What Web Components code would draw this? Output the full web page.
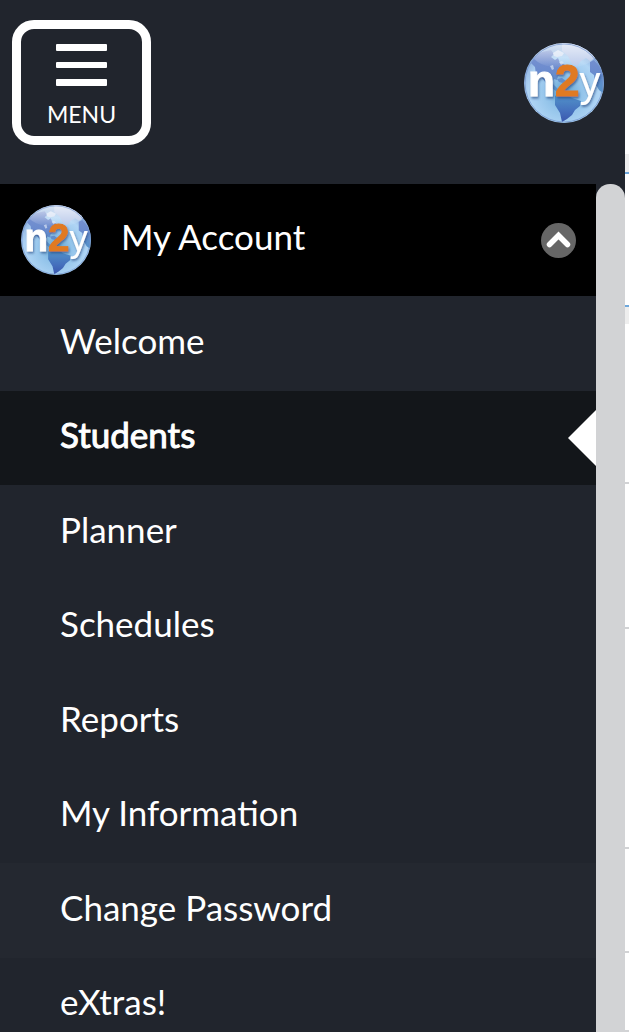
<!DOCTYPE html>
<html lang="en">
<head>
<meta charset="utf-8">
<meta name="viewport" content="width=device-width, initial-scale=1">
<title>n2y - Students</title>
<style>
    body {
        margin: 0;
        font-family: Lato, "Liberation Sans", sans-serif;
        color: #fff;
        background: #fff;
    }
</style>
</head>
<body>
<app-shell>
    <app-header slot="header"></app-header>
    <nav-menu slot="menu">
        <account-header slot="heading">My Account</account-header>
        <nav-item href="#welcome">Welcome</nav-item>
        <nav-item href="#students" active>Students</nav-item>
        <nav-item href="#planner">Planner</nav-item>
        <nav-item href="#schedules">Schedules</nav-item>
        <nav-item href="#reports">Reports</nav-item>
        <nav-item href="#information">My Information</nav-item>
        <nav-item href="#password" hovered>Change Password</nav-item>
        <nav-item href="#extras">eXtras!</nav-item>
    </nav-menu>
    <page-rows slot="page"></page-rows>
</app-shell>
<script>
class AppShell extends HTMLElement {

    constructor() {
        super();
        this.root = this.attachShadow({ mode: 'open' });
        this.root.innerHTML = `
        <style>
        :host{
            display: grid;
            grid-template-columns: minmax(0, 1fr) 4px;
            height: 100vh;
            overflow: hidden;
        }
        .side{
            display: flex;
            flex-direction: column;
            min-height: 0;
            background: #21252d;
        }
        </style>
        <div class="side">
        <slot name="header"></slot>
        <slot name="menu"></slot>
        </div>
        <slot name="page"></slot>
        `;
    }
}
customElements.define('app-shell', AppShell);

class BrandLogo extends HTMLElement {

    constructor() {
        super();
        this.root = this.attachShadow({ mode: 'open' });
        this.root.innerHTML = `
        <style>
        :host{
            display: block;
            flex: none;
            width: var(--logo-size, 80px);
            height: var(--logo-size, 80px);
        }
        svg{
            display: block;
            width: 100%;
            height: 100%;
            overflow: visible;
        }
        text{
            font-family: "Liberation Sans", Arial, sans-serif;
        }
        </style>
        <svg viewBox="0 0 80 80" role="img" aria-label="n2y">
        <defs>
        <radialGradient id="sea" cx="50%" cy="62%" r="55%">
        <stop offset="0" stop-color="#5fa3d0"/>
        <stop offset=".4" stop-color="#93c4ea"/>
        <stop offset=".8" stop-color="#b0d5f5"/>
        <stop offset="1" stop-color="#94b6e2"/>
        </radialGradient>
        <linearGradient id="land" x1="0" y1="0" x2="0" y2="80" gradientUnits="userSpaceOnUse">
        <stop offset="0" stop-color="#8196d2"/>
        <stop offset=".35" stop-color="#6b8bce"/>
        <stop offset=".65" stop-color="#5193c9"/>
        <stop offset=".85" stop-color="#4570bd"/>
        <stop offset="1" stop-color="#3a55ac"/>
        </linearGradient>
        <linearGradient id="shine" x1="0" y1="0" x2="0" y2="1">
        <stop offset="0" stop-color="#fff" stop-opacity=".75"/>
        <stop offset="1" stop-color="#fff" stop-opacity="0"/>
        </linearGradient>
        <filter id="shade" x="-20%" y="-20%" width="140%" height="150%">
        <feDropShadow dx="1" dy="2" stdDeviation="1" flood-color="#24457f" flood-opacity=".65"/>
        </filter>
        <clipPath id="ball"><circle cx="40" cy="40" r="40"/></clipPath>
        </defs>
        <g clip-path="url(#ball)">
        <rect width="80" height="80" fill="url(#sea)"/>
        <path d="M38 0 60 2 72 14 66 18 62 15 57 18 53 23 48 21 44 13 38 8z" fill="#b9c9ea"/>
        <g fill="url(#land)">
        <path d="M12 13 18 9 27 7 30 11 27 14 31 17 34 15 36 20 40 21 43 25 39 27 37 31 34 33 33 37 30 36 28 40 31 43 34 46 36 50 32 48 26 44 22 40 18 35 12 32 11 24 7 20z"/>
        <path d="M31 53 35 50 42 51 48 55 57 58 56 63 51 67 48 72 43 76 38 79 36 70 31 62z"/>
        <path d="M66 19 70 17 76 24 80 34 79 50 75 47 71 40 70 32 66 29z"/>
        <path d="M33 36 38 35 42 38 39 40 35 39z"/>
        </g>
        <g fill="#d5e1f4">
        <path d="M29 10 34 7 40 10 38 13 33 14 30 13z"/>
        <path d="M26 23 29 22 30 26 28 27z" opacity=".7"/>
        <path d="M35 19 38 18 40 20 37 22z" opacity=".7"/>
        </g>
        <ellipse cx="40" cy="11" rx="32" ry="14" fill="url(#shine)"/>
        </g>
        <circle cx="40" cy="40" r="39" fill="none" stroke="#7191cc" stroke-width="1" opacity=".7"/>
        <text x="4" y="53" font-size="44" font-weight="700" fill="#fff" stroke="#fff" stroke-width="1" filter="url(#shade)">n<tspan fill="#e07a22" stroke="#e07a22">2</tspan><tspan font-weight="400" font-size="42" stroke="none">y</tspan></text>
        </svg>
        `;
    }
}
customElements.define('brand-logo', BrandLogo);

class AppHeader extends HTMLElement {

    constructor() {
        super();
        this.root = this.attachShadow({ mode: 'open' });
        this.root.innerHTML = `
        <style>
        :host{
            display: flex;
            flex: none;
            justify-content: space-between;
            align-items: flex-start;
            box-sizing: border-box;
            height: 184px;
            padding: 20px 21px 0 12px;
        }
        button{
            display: flex;
            flex-direction: column;
            align-items: center;
            gap: 12px;
            box-sizing: border-box;
            width: 139px;
            height: 125px;
            padding: 15px 0 0;
            border: 9px solid #fff;
            border-radius: 22px;
            background: none;
            color: inherit;
            font: 23px/32px Lato, sans-serif;
            cursor: pointer;
        }
        .bars{
            display: block;
            width: 51px;
            height: 42px;
        }
        brand-logo{
            margin-top: 23px;
        }
        </style>
        <button type="button">
        <svg class="bars" viewBox="0 0 51 42" fill="#fff" aria-hidden="true">
        <rect width="51" height="7" rx="1"/>
        <rect y="18" width="51" height="6" rx="1"/>
        <rect y="35" width="51" height="7" rx="1"/>
        </svg>
        <span>MENU</span>
        </button>
        <brand-logo></brand-logo>
        `;
    }
}
customElements.define('app-header', AppHeader);

class NavMenu extends HTMLElement {

    constructor() {
        super();
        this.root = this.attachShadow({ mode: 'open' });
        this.root.innerHTML = `
        <style>
        :host{
            display: flex;
            flex: 1;
            min-height: 0;
        }
        nav{
            flex: 1;
            min-width: 0;
            overflow: hidden;
        }
        .scrollbar{
            width: 29px;
            border-radius: 14px 14px 0 0;
            background: #d2d3d5;
        }
        </style>
        <nav aria-label="Main">
        <slot name="heading"></slot>
        <slot></slot>
        </nav>
        <div class="scrollbar"></div>
        `;
    }
}
customElements.define('nav-menu', NavMenu);

class AccountHeader extends HTMLElement {

    constructor() {
        super();
        this.root = this.attachShadow({ mode: 'open' });
        this.root.innerHTML = `
        <style>
        :host{
            display: block;
            --logo-size: 70px;
        }
        button{
            display: flex;
            align-items: center;
            gap: 30px;
            box-sizing: border-box;
            width: 100%;
            height: 112px;
            padding: 0 20px 0 21px;
            border: 0;
            background: #000;
            color: inherit;
            font: 35px/44px Lato, sans-serif;
            text-align: left;
            cursor: pointer;
        }
        .label{
            flex: 1;
            padding-bottom: 8px;
        }
        .arrow{
            width: 35px;
            height: 35px;
        }
        </style>
        <button type="button" aria-expanded="true">
        <brand-logo></brand-logo>
        <span class="label"><slot></slot></span>
        <svg class="arrow" viewBox="0 0 35 35" aria-hidden="true">
        <circle cx="17.5" cy="17.5" r="17.5" fill="#666"/>
        <path d="M8.5 21.5 17.5 12.5 26.5 21.5" fill="none" stroke="#fff" stroke-width="5.5" stroke-linecap="round"/>
        </svg>
        </button>
        `;
    }
}
customElements.define('account-header', AccountHeader);

class NavItem extends HTMLElement {

    constructor() {
        super();
        this.root = this.attachShadow({ mode: 'open' });
        this.root.innerHTML = `
        <style>
        :host{
            display: block;
        }
        a{
            display: flex;
            align-items: center;
            justify-content: space-between;
            box-sizing: border-box;
            height: 94px;
            padding: 0 0 8px 60px;
            color: inherit;
            font-size: 35px;
            line-height: 44px;
            text-decoration: none;
        }
        :host(:nth-child(even)) a{
            height: 95px;
        }
        .pointer{
            display: none;
            width: 28px;
            height: 56px;
            margin-top: 8px;
            background: #fff;
            clip-path: polygon(100% 0, 0 50%, 100% 100%);
        }
        :host([active]) a{
            background: #13161a;
            -webkit-text-stroke: 1px #fff;
        }
        :host([active]) .pointer{
            display: block;
        }
        :host([hovered]) a{
            background: #242830;
        }
        </style>
        <a><slot></slot><span class="pointer"></span></a>
        `;
    }

    static get observedAttributes() {
        return ['href'];
    }

    attributeChangedCallback(attrName, oldVal, newVal) {
        this.root.querySelector('a').href = newVal;
    }
}
customElements.define('nav-item', NavItem);

// sliver of the page that stays visible beside the open menu
class PageRows extends HTMLElement {

    constructor() {
        super();
        this.root = this.attachShadow({ mode: 'open' });
        this.root.innerHTML = `
        <style>
        :host{
            display: grid;
            grid-template-rows: 174px 133px 177px 145px 220px 104px 1fr;
            background: #fff;
        }
        div{
            border-bottom: 2px solid #d2d3d5;
        }
        .tabs{
            border-color: #6fa8dc;
            background: linear-gradient(#eee, #eee) bottom / 100% 18px no-repeat;
        }
        .banner{
            border-color: #6fa8dc;
        }
        .list{
            background: linear-gradient(#eee, #eee) top / 100% 17px no-repeat;
        }
        </style>
        <div class="tabs"></div>
        <div class="banner"></div>
        <div class="list"></div>
        <div></div>
        <div></div>
        <div></div>
        <div></div>
        `;
    }
}
customElements.define('page-rows', PageRows);
</script>
</body>
</html>
